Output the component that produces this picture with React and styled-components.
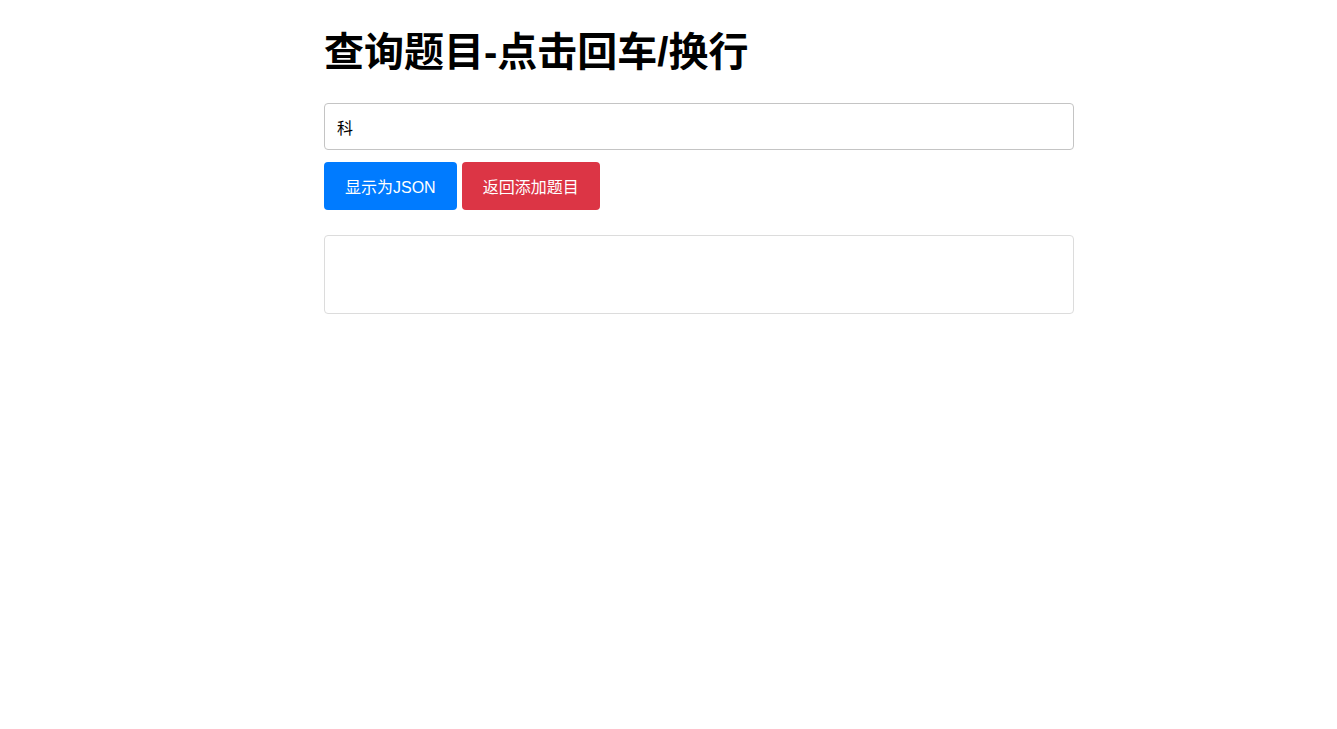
import styled, { createGlobalStyle } from 'styled-components';

const GlobalStyle = createGlobalStyle`
    body {
        margin: 0;
        background: #fff;
        font-family: "Liberation Sans", "Noto Sans CJK SC", sans-serif;
        color: #000;
    }
`;

export default function App() {
    return (
        <Page>
            <GlobalStyle />
            <Container>
                <Title>查询题目-点击回车/换行</Title>
                <SearchInput defaultValue="科" />
                <ButtonRow>
                    <Btn $color="#007bff">显示为JSON</Btn>
                    <Btn $color="#dc3545">返回添加题目</Btn>
                </ButtonRow>
                <ResultBox />
            </Container>
        </Page>
    );
}

const Page = styled.div`
    display: flex;
    justify-content: center;
    width: 100vw;
    min-height: 100vh;
`;

const Container = styled.div`
    display: flex;
    flex-direction: column;
    width: 750px;
    padding-top: 26px;
    margin-left: 61px;
`;

const Title = styled.h1`
    margin: 0 0 24px 0;
    font-size: 40px;
    line-height: 53px;
    font-weight: bold;
    font-family: "Liberation Sans", "Noto Sans CJK SC", sans-serif;
`;

const SearchInput = styled.input`
    box-sizing: border-box;
    height: 47px;
    width: 100%;
    padding: 0 12px;
    border: 1px solid #c4c4c4;
    border-radius: 4px;
    font-size: 16px;
    font-family: "Liberation Sans", "Noto Sans CJK SC", sans-serif;
    color: #000;
    outline: none;
`;

const ButtonRow = styled.div`
    display: flex;
    gap: 5px;
    margin-top: 12px;
`;

const Btn = styled.button`
    height: 48px;
    padding: 0 21px;
    border: none;
    border-radius: 4px;
    background: ${(p) => p.$color};
    color: #fff;
    font-size: 16px;
    font-family: "Liberation Sans", "Noto Sans CJK SC", sans-serif;
    cursor: pointer;
`;

const ResultBox = styled.div`
    box-sizing: border-box;
    height: 79px;
    margin-top: 25px;
    border: 1px solid #dcdcdc;
    border-radius: 4px;
`;
